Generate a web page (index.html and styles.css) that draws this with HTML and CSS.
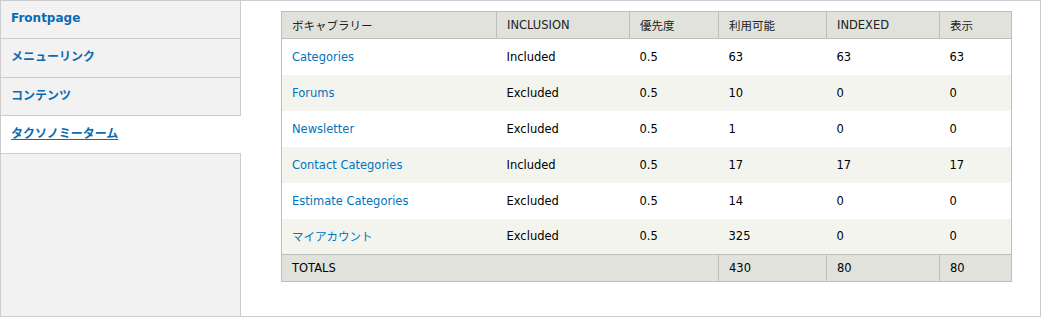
FILE: index.html
```html
<!DOCTYPE html>
<html lang="ja">
<head>
    <meta charset="UTF-8">
    <title>XML sitemap</title>
    <link rel="stylesheet" href="styles.css">
</head>
<body>
    <div class="vertical-tabs">
        <ul class="tab-list">
            <li class="tab first"><a href="#">Frontpage</a></li>
            <li class="tab second"><a href="#">メニューリンク</a></li>
            <li class="tab"><a href="#">コンテンツ</a></li>
            <li class="tab selected"><a href="#">タクソノミーターム</a></li>
            <li class="tab-rest"></li>
        </ul>

        <div class="tab-panel">
            <table class="sitemap-table">
                <thead>
                    <tr>
                        <th class="col-name">ボキャブラリー</th>
                        <th class="col-incl">INCLUSION</th>
                        <th class="col-prio">優先度</th>
                        <th class="col-avail">利用可能</th>
                        <th class="col-indexed">INDEXED</th>
                        <th class="col-visible">表示</th>
                    </tr>
                </thead>
                <tbody>
                    <tr>
                        <td><a href="#">Categories</a></td>
                        <td>Included</td>
                        <td>0.5</td>
                        <td>63</td>
                        <td>63</td>
                        <td>63</td>
                    </tr>
                    <tr class="even">
                        <td><a href="#">Forums</a></td>
                        <td>Excluded</td>
                        <td>0.5</td>
                        <td>10</td>
                        <td>0</td>
                        <td>0</td>
                    </tr>
                    <tr>
                        <td><a href="#">Newsletter</a></td>
                        <td>Excluded</td>
                        <td>0.5</td>
                        <td>1</td>
                        <td>0</td>
                        <td>0</td>
                    </tr>
                    <tr class="even">
                        <td><a href="#">Contact Categories</a></td>
                        <td>Included</td>
                        <td>0.5</td>
                        <td>17</td>
                        <td>17</td>
                        <td>17</td>
                    </tr>
                    <tr>
                        <td><a href="#">Estimate Categories</a></td>
                        <td>Excluded</td>
                        <td>0.5</td>
                        <td>14</td>
                        <td>0</td>
                        <td>0</td>
                    </tr>
                    <tr class="even">
                        <td><a href="#">マイアカウント</a></td>
                        <td>Excluded</td>
                        <td>0.5</td>
                        <td>325</td>
                        <td>0</td>
                        <td>0</td>
                    </tr>
                </tbody>
                <tfoot>
                    <tr>
                        <td colspan="3">TOTALS</td>
                        <td>430</td>
                        <td>80</td>
                        <td>80</td>
                    </tr>
                </tfoot>
            </table>
        </div>
    </div>
</body>
</html>
```

FILE: styles.css
```css
* {
    margin: 0;
    padding: 0;
    box-sizing: border-box;
}

body {
    background: #ffffff;
    font-family: "DejaVu Sans", "Noto Sans CJK JP", sans-serif;
    font-size: 11.5px;
    color: #000000;
}

a {
    color: #0074bd;
    text-decoration: none;
}

/* Rahmen */
.vertical-tabs {
    display: flex;
    width: 1041px;
    height: 317px;
    border: 1px solid #cccccc;
}

/* Tabs links */
.tab-list {
    list-style: none;
    width: 240px;
    display: flex;
    flex-direction: column;
    flex-shrink: 0;
}

.tab {
    height: 38px;
    display: flex;
    align-items: center;
    padding: 0 0 5px 10px;
    background: #f2f2f2;
    border-right: 1px solid #cccccc;
    border-bottom: 1px solid #cccccc;
}

.tab.first {
    padding-bottom: 4px;
}

.tab.second {
    height: 39px;
}

.tab a {
    font-weight: bold;
    font-size: 12px;
    color: #0a6bb2;
}

.tab.selected {
    background: #ffffff;
    border-right: none;
}

.tab.selected a {
    text-decoration: underline;
}

.tab-rest {
    flex-grow: 1;
    background: #f2f2f2;
    border-right: 1px solid #cccccc;
}

/* Tabelle */
.tab-panel {
    flex-grow: 1;
    padding: 10px 28px 0 40px;
}

.sitemap-table {
    width: 100%;
    border-collapse: collapse;
    border: 1px solid #bebfb9;
}

.sitemap-table th,
.sitemap-table td {
    text-align: left;
    padding: 0 10px;
    white-space: nowrap;
}

.sitemap-table th {
    height: 27px;
    font-weight: normal;
    color: #222222;
    background: #e1e2dc;
    border-right: 1px solid #bebfb9;
    border-bottom: 1px solid #bebfb9;
}

.sitemap-table th:last-child {
    border-right: none;
}

.col-name { width: 215px; }
.col-incl { width: 133px; }
.col-prio { width: 89px; }
.col-avail { width: 108px; }
.col-indexed { width: 113px; }

.sitemap-table tbody td {
    height: 36px;
}

.sitemap-table tbody tr.even {
    background: #f3f4ee;
}

.sitemap-table tfoot td {
    height: 27px;
    background: #e1e2dc;
    border-top: 1px solid #bebfb9;
    border-right: 1px solid #bebfb9;
}

.sitemap-table tfoot td:last-child {
    border-right: none;
}
```
